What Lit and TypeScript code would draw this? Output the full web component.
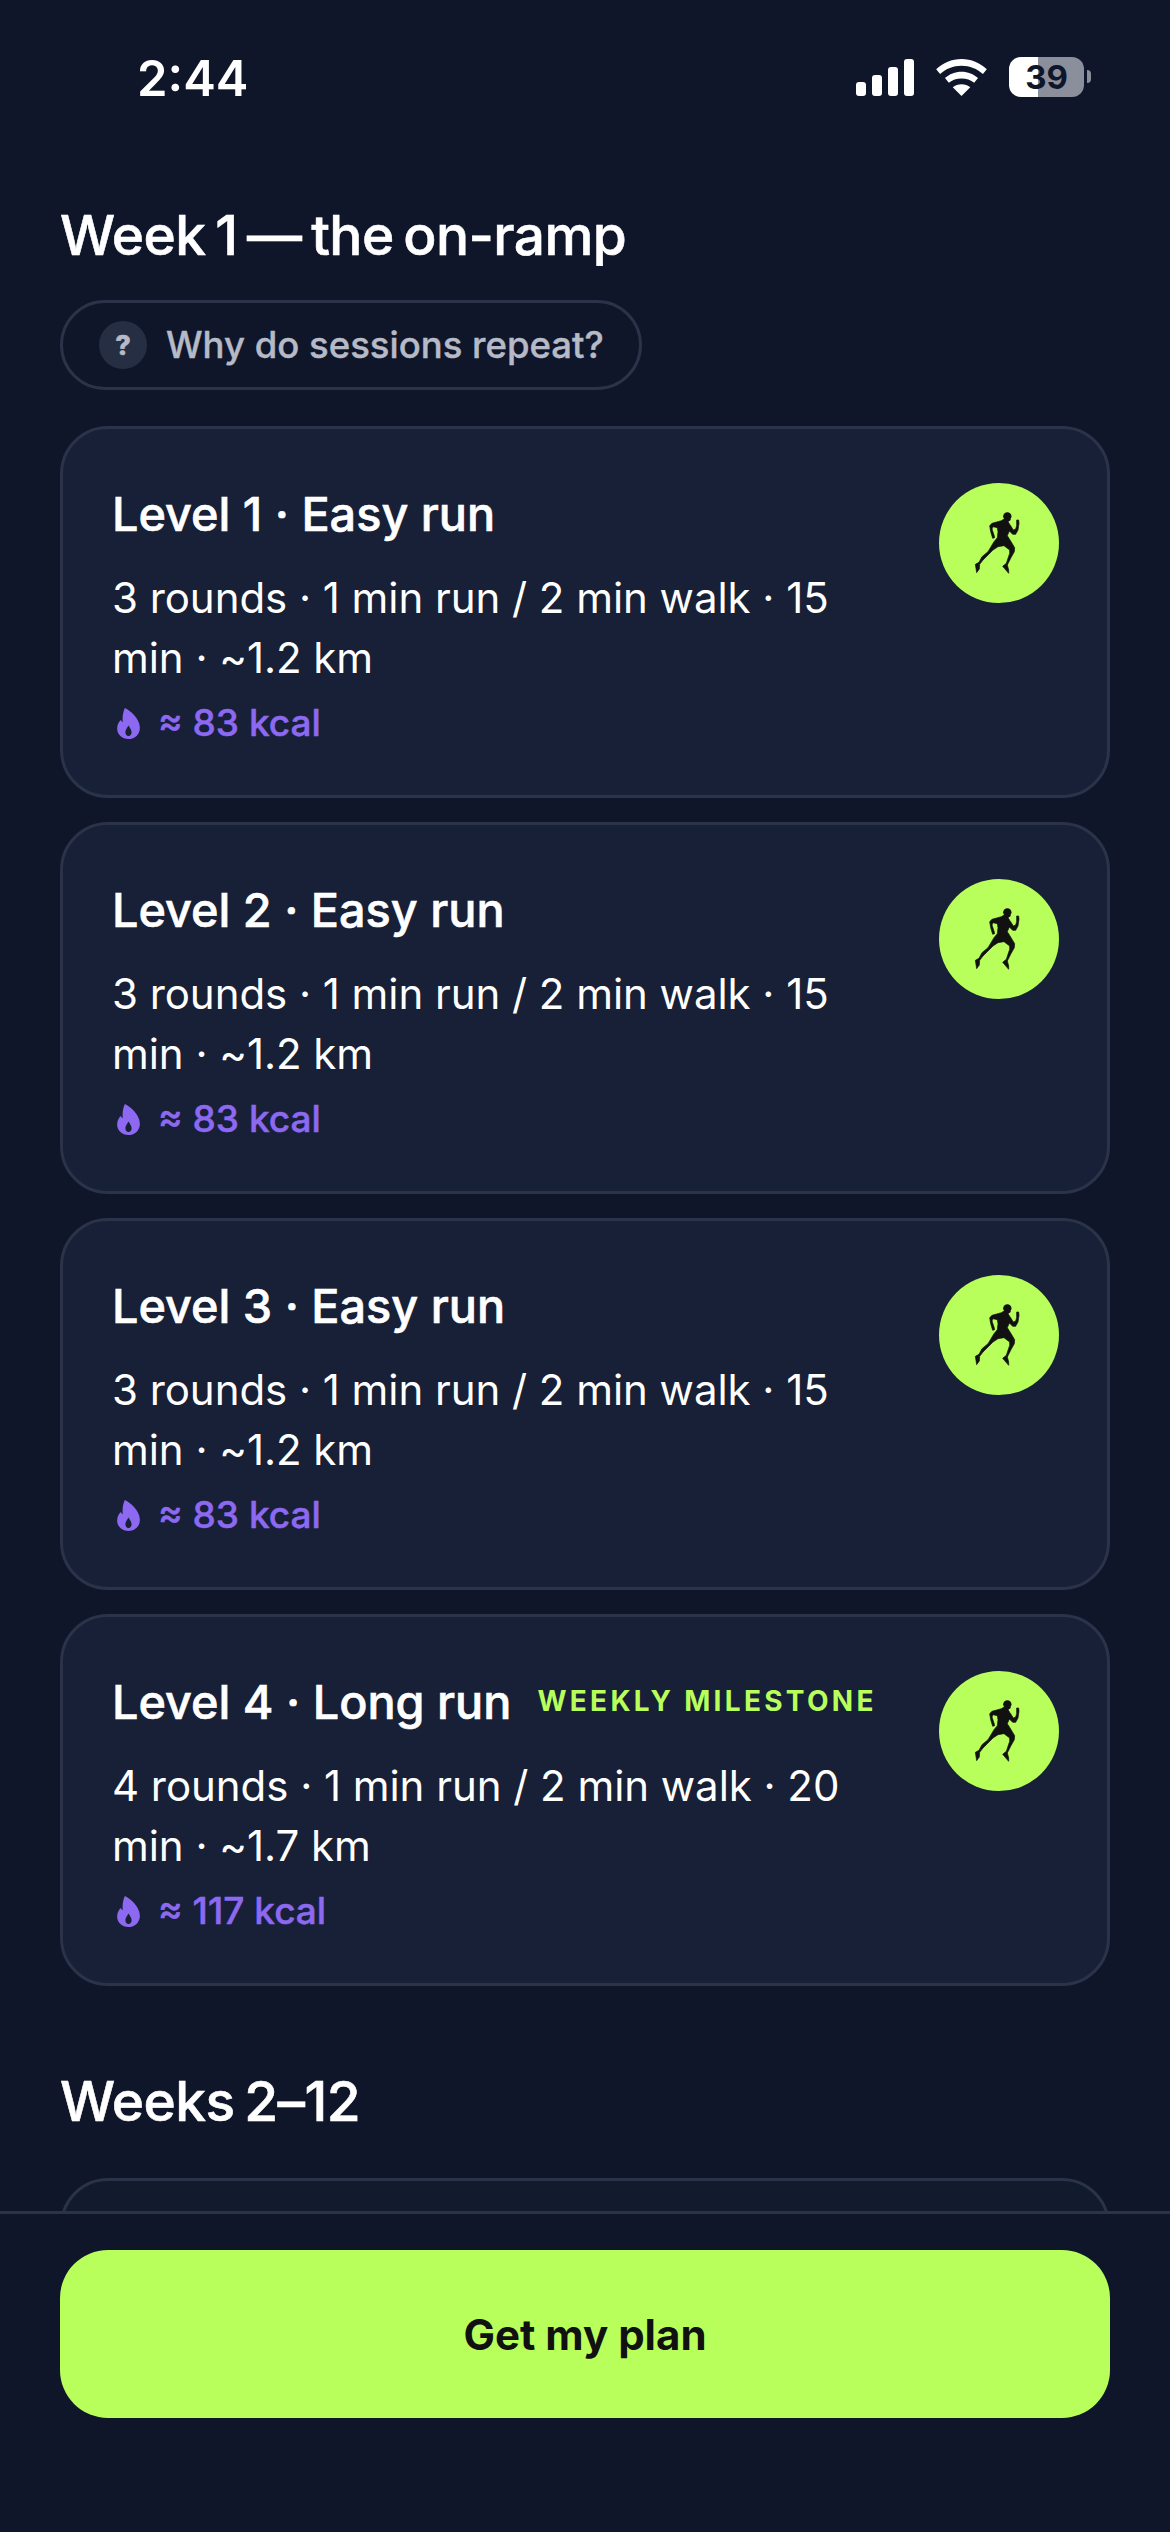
import { LitElement, html, css, svg } from "lit";
import { customElement } from "lit/decorators.js";

const runner = svg`<circle cx="118" cy="34" r="12.500" fill="#111"/><path fill="#111" stroke="#111" stroke-width="2" stroke-linejoin="round" d="M108 42L100 47L72 55L65 62L68 80L74 100L80 98L78 90L72 72L75 65L88 68L90 80L88 98L78 110L60 140L42 155L33 172L22 178L26 203L34 192L35 178L45 165L75 135L90 125L108 122L125 135L125 145L115 175L104 184L122 205L122 195L118 180L128 160L139 140L140 128L128 108L118 92L124 78L134 88L143 88L150 75L153 55L152 45L146 45L146 62L143 72L136 75L128 62L125 58L120 50L128 44Z"/>`;

const cards = [
  { t: "Level 1 · Easy run", d: "3 rounds · 1 min run / 2 min walk · 15 min · ~1.2 km", k: "≈ 83 kcal" },
  { t: "Level 2 · Easy run", d: "3 rounds · 1 min run / 2 min walk · 15 min · ~1.2 km", k: "≈ 83 kcal" },
  { t: "Level 3 · Easy run", d: "3 rounds · 1 min run / 2 min walk · 15 min · ~1.2 km", k: "≈ 83 kcal" },
  { t: "Level 4 · Long run", d: "4 rounds · 1 min run / 2 min walk · 20 min · ~1.7 km", k: "≈ 117 kcal", m: "WEEKLY MILESTONE" },
];

@customElement("app-root")
export class AppRoot extends LitElement {
  static styles = css`
    :host { display: block; width: 1170px; height: 2532px; overflow: hidden; background: #0f162a; color: #fff; font-family: Inter, "Liberation Sans", sans-serif; }
    .page { display: flex; flex-direction: column; height: 2532px; }
    .status { flex: none; height: 126px; display: flex; justify-content: space-between; padding: 50px 79px 0 137px; box-sizing: border-box; }
    .time { font-size: 49px; font-weight: 600; line-height: 58px; }
    .sicons { display: flex; align-items: flex-start; padding-top: 7px; }
    .signal { width: 58px; height: 37px; margin-right: 22px; margin-top: 2px; }
    .wifi { width: 51px; height: 37px; margin-right: 22px; margin-top: 2px; }
    .batt { width: 75px; height: 40px; border-radius: 12px; background: linear-gradient(90deg, #fff 0 29px, #8b8f9c 29px); color: #0f162a; font-size: 33px; font-weight: 700; line-height: 40px; text-align: center; }
    .nub { width: 4px; height: 13px; margin: 13px 0 0 3px; border-radius: 0 7px 7px 0; background: #8b8f9c; }
    .scroll { flex: 1; min-height: 0; overflow: hidden; padding: 0 60px; }
    h2 { margin: 0; font-size: 55px; line-height: 68px; font-weight: 500; letter-spacing: -0.55px; word-spacing: -4.500px; -webkit-text-stroke: 0.6px #fff; }
    .h1 { margin-top: 75px; }
    .pill { display: inline-flex; align-items: center; gap: 19px; box-sizing: border-box; width: 582px; height: 90px; margin-top: 31px; padding: 0 36px; border: 3px solid #2a3349; border-radius: 45px; color: #b6bac6; font-size: 36.500px; font-weight: 500; white-space: nowrap; -webkit-text-stroke: 0.4px #b6bac6; }
    .q { width: 48px; height: 48px; flex: none; border-radius: 50%; background: #252e43; color: #b6bac6; font-size: 27px; font-weight: 800; display: flex; align-items: center; justify-content: center; }
    .list { display: flex; flex-direction: column; gap: 24px; margin-top: 36px; }
    .card { box-sizing: border-box; height: 372px; display: flex; justify-content: space-between; gap: 48px; padding: 58px 48px 0 49px; background: #172036; border: 3px solid #2a3349; border-radius: 48px; }
    .body { flex: 1; min-width: 0; }
    .title { display: flex; align-items: center; gap: 26px; font-size: 46.800px; font-weight: 500; line-height: 54px; white-space: nowrap; }
    .tname { -webkit-text-stroke: 0.6px #fff; }
    .mile { color: #b8ff5c; font-size: 28px; font-weight: 700; letter-spacing: 3.300px; margin-top: -2px; }
    .desc { margin-top: 27px; font-size: 42px; line-height: 60px; font-weight: 400; color: #fff; letter-spacing: -0.05px; }
    .kcal { display: flex; align-items: center; gap: 18px; margin-top: 10px; color: #8d69f1; font-size: 37px; font-weight: 500; line-height: 50px; -webkit-text-stroke: 0.5px #8d69f1; }
    .flame { width: 23px; height: 31px; flex: none; margin-left: 5px; }
    .circle { flex: none; width: 120px; height: 120px; margin-top: -4px; border-radius: 50%; background: #b8ff5c; display: flex; align-items: center; justify-content: center; }
    .circle svg { width: 60px; height: 75px; margin: -1px 2px 0 0; }
    .h2 { margin-top: 81px; }
    .stub { height: 200px; margin-top: 43px; border: 3px solid #2a3349; border-radius: 48px; background: #121a2e; box-sizing: border-box; }
    .foot { flex: none; box-sizing: border-box; height: 321px; border-top: 3px solid #2a3349; padding: 36px 60px 0; background: #0f162a; }
    .btn { height: 168px; border-radius: 48px; background: #b8ff5c; color: #111; display: flex; align-items: center; justify-content: center; font-size: 42px; font-weight: 700; }
  `;

  render() {
    return html`<div class="page">
      <div class="status">
        <div class="time">2:44</div>
        <div class="sicons">
          <svg class="signal" viewBox="0 0 58 37"><rect x="0" y="23" width="10" height="14" rx="3" fill="#fff"/><rect x="16" y="16" width="10" height="21" rx="3" fill="#fff"/><rect x="32" y="8" width="10" height="29" rx="3" fill="#fff"/><rect x="48" y="0" width="10" height="37" rx="3" fill="#fff"/></svg>
          <svg class="wifi" viewBox="0 0 52 38"><path fill="#fff" d="M26 0c10 0 19 4 26 10.500l-4 5C42 10 34.500 7 26 7S10 10 4 15.500l-4-5C7 4 16 0 26 0z"/><path fill="#fff" d="M26 13c6.500 0 12.500 2.500 17 6.500l-4 5C35.500 21.500 31 20 26 20s-9.500 1.500-13 4.500l-4-5c4.500-4 10.500-6.500 17-6.500z"/><path fill="#fff" d="M26 26c3.500 0 6.500 1 9 3l-9 9-9-9c2.500-2 5.500-3 9-3z"/></svg>
          <div class="batt">39</div>
          <div class="nub"></div>
        </div>
      </div>
      <div class="scroll">
        <h2 class="h1">Week 1 — the on-ramp</h2>
        <div class="pill"><span class="q">?</span>Why do sessions repeat?</div>
        <div class="list">
          ${cards.map((c) => html`<div class="card">
            <div class="body">
              <div class="title"><span class="tname">${c.t}</span>${c.m ? html`<span class="mile">${c.m}</span>` : ""}</div>
              <div class="desc">${c.d}</div>
              <div class="kcal">
                <svg class="flame" viewBox="0 0 22 30"><path fill="#8d69f1" fill-rule="evenodd" d="M7.500 0C13 2.500 22 10.500 22 19c0 6.500-4.800 11-11 11S0 25.500 0 20c0-3.500 1.500-6 3.400-8.300.6 1 1.200 1.700 2 2.200C5 9 5.500 4 7.500 0zM11 17c-1.800 2.700-3 4.600-3 6.700 0 1.900 1.300 3.300 3 3.300s3-1.400 3-3.300c0-2.100-1.200-4-3-6.700z"/></svg>
                <span>${c.k}</span>
              </div>
            </div>
            <div class="circle"><svg viewBox="0 0 180 225">${runner}</svg></div>
          </div>`)}
        </div>
        <h2 class="h2">Weeks 2–12</h2>
        <div class="stub"></div>
      </div>
      <div class="foot"><div class="btn">Get my plan</div></div>
    </div>`;
  }
}
